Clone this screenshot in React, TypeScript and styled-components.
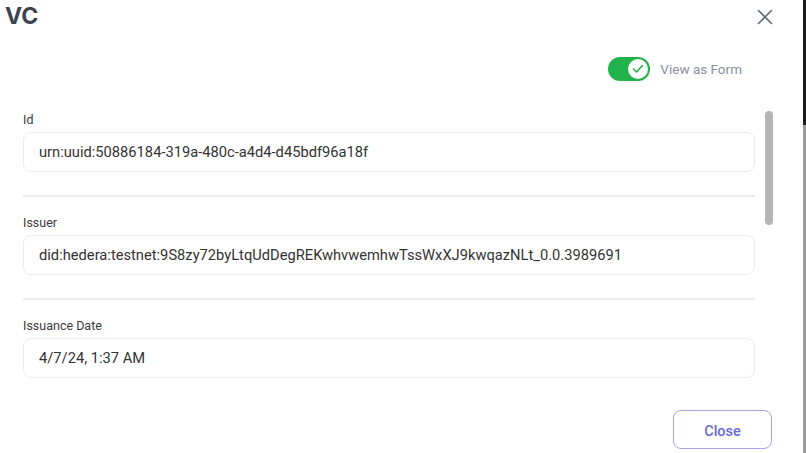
import * as React from 'react';
import styled, { createGlobalStyle } from 'styled-components';

const GlobalStyle = createGlobalStyle`
	html, body {
		margin: 0;
		padding: 0;
		background: #ffffff;
		font-family: Roboto, 'Liberation Sans', sans-serif;
	}
`;

const Screen = styled.div`
	display: flex;
	width: 806px;
	height: 453px;
	overflow: hidden;
`;

const Dialog = styled.div`
	width: 803px;
	height: 453px;
	display: flex;
	flex-direction: column;
	background: #ffffff;
	overflow: hidden;
`;

const Backdrop = styled.div`
	flex: 1;
	background: linear-gradient(#1c1c1c 0 125px, #9c9c9c 125px);
`;

const Header = styled.div`
	display: flex;
	align-items: center;
	justify-content: space-between;
	padding: 2px 30px 0 5px;
	height: 29px;
`;

const Title = styled.h2`
	margin: 0;
	font-family: Inter, 'Liberation Sans', sans-serif;
	font-size: 23px;
	line-height: 29px;
	font-weight: 700;
	color: #3d434f;
`;

const CloseIcon = styled.button`
	border: none;
	background: none;
	padding: 0;
	display: flex;
	cursor: pointer;
`;

const ToggleRow = styled.div`
	display: flex;
	align-items: center;
	justify-content: flex-end;
	padding: 26px 61px 0 0;
`;

const Switch = styled.div`
	width: 42px;
	height: 24px;
	border-radius: 12px;
	background: #21b24b;
	display: flex;
	align-items: center;
	justify-content: flex-end;
	padding: 0 2px;
	box-sizing: border-box;
`;

const Knob = styled.span`
	width: 20px;
	height: 20px;
	border-radius: 50%;
	background: #ffffff;
	display: flex;
	align-items: center;
	justify-content: center;
`;

const ToggleLabel = styled.span`
	margin-left: 10px;
	font-size: 13.5px;
	color: #8a8fa0;
`;

const Body = styled.div`
	display: flex;
	height: 285px;
	margin-top: 27px;
	overflow: hidden;
`;

const Fields = styled.div`
	width: 732px;
	margin-left: 23px;
	display: flex;
	flex-direction: column;
`;

const Field = styled.div`
	display: flex;
	flex-direction: column;
	padding-top: 4px;
	border-bottom: 2px solid #ececee;
	padding-bottom: 23px;
	margin-bottom: 14px;
`;

const Label = styled.label`
	font-size: 12.5px;
	line-height: 16px;
	color: #3a3a3a;
	margin-bottom: 4px;
`;

const Value = styled.div`
	height: 40px;
	box-sizing: border-box;
	border: 1px solid #ededf0;
	border-radius: 8px;
	display: flex;
	align-items: center;
	overflow: hidden;
`;

const ValueText = styled.span`
	margin-left: 15px;
	font-size: 14.7px;
	color: #333333;
	white-space: nowrap;
`;

const ScrollTrack = styled.div`
	width: 8px;
	margin-left: 10px;
	padding-top: 3px;
`;

const ScrollThumb = styled.div`
	width: 8px;
	height: 114px;
	border-radius: 4px;
	background: #b5b5b5;
`;

const Footer = styled.div`
	display: flex;
	justify-content: flex-end;
	padding: 17px 31px 0 0;
`;

const CloseButton = styled.button`
	width: 99px;
	height: 39px;
	border: 1px solid #a3a3f2;
	border-radius: 8px;
	background: #ffffff;
	color: #6a6ad8;
	font-family: Roboto, 'Liberation Sans', sans-serif;
	font-size: 14.5px;
	font-weight: 500;
	padding-top: 4px;
	cursor: pointer;
`;

const fields = [
	{ label: 'Id', value: 'urn:uuid:50886184-319a-480c-a4d4-d45bdf96a18f' },
	{
		label: 'Issuer',
		value: 'did:hedera:testnet:9S8zy72byLtqUdDegREKwhvwemhwTssWxXJ9kwqazNLt_0.0.3989691',
	},
	{ label: 'Issuance Date', value: '4/7/24, 1:37 AM' },
];

export default function App() {
	return (
		<>
			<GlobalStyle />
			<Screen>
				<Dialog>
					<Header>
						<Title>VC</Title>
						<CloseIcon aria-label="close">
							<svg width="16" height="16" viewBox="0 0 16 16">
								<path d="M1.5 1.5 L14.5 14.5 M14.5 1.5 L1.5 14.5" stroke="#666a70" strokeWidth="1.6" strokeLinecap="round" />
							</svg>
						</CloseIcon>
					</Header>
					<ToggleRow>
						<Switch>
							<Knob>
								<svg width="12" height="10" viewBox="0 0 12 10">
									<path d="M1.5 5 L4.5 8 L10.5 1.5" fill="none" stroke="#21b24b" strokeWidth="1.6" strokeLinecap="round" strokeLinejoin="round" />
								</svg>
							</Knob>
						</Switch>
						<ToggleLabel>View as Form</ToggleLabel>
					</ToggleRow>
					<Body>
						<Fields>
							{fields.map((f) => (
								<Field key={f.label}>
									<Label>{f.label}</Label>
									<Value>
										<ValueText>{f.value}</ValueText>
									</Value>
								</Field>
							))}
						</Fields>
						<ScrollTrack>
							<ScrollThumb />
						</ScrollTrack>
					</Body>
					<Footer>
						<CloseButton>Close</CloseButton>
					</Footer>
				</Dialog>
				<Backdrop />
			</Screen>
		</>
	);
}
